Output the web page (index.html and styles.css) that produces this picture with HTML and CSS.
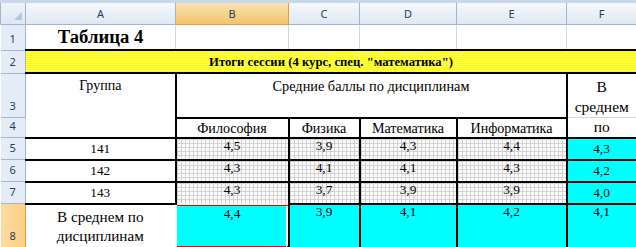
FILE: index.html
```html
<!DOCTYPE html>
<html>
<head>
<meta charset="utf-8">
<title>Таблица 4</title>
<link rel="stylesheet" href="styles.css">
</head>
<body>
<div class="sheet">
  <div class="topbar"></div>
  <table class="grid">
    <colgroup>
      <col class="c-rh"><col class="c-a"><col class="c-b"><col class="c-c"><col class="c-d"><col class="c-e"><col class="c-f">
    </colgroup>
    <tr class="r-hd">
      <th class="corner"><span class="tri"></span></th>
      <th class="ch">A</th><th class="ch ch-sel">B</th><th class="ch">C</th><th class="ch">D</th><th class="ch">E</th><th class="ch ch-last">F</th>
    </tr>
    <tr class="r1">
      <th class="rh">1</th>
      <td class="title">Таблица 4</td><td></td><td></td><td></td><td></td><td></td>
    </tr>
    <tr class="r2">
      <th class="rh">2</th>
      <td class="banner" colspan="6">Итоги сессии (4 курс, спец. "математика")</td>
    </tr>
    <tr class="r3">
      <th class="rh">3</th>
      <td class="grp" rowspan="2">Группа</td>
      <td class="box head" colspan="4">Средние баллы по дисциплинам</td>
      <td class="avg-top">В<br>среднем</td>
    </tr>
    <tr class="r4">
      <th class="rh">4</th>
      <td class="box subj">Философия</td>
      <td class="box subj">Физика</td>
      <td class="box subj">Математика</td>
      <td class="box subj">Информатика</td>
      <td class="avg-bot">по</td>
    </tr>
    <tr class="r5">
      <th class="rh">5</th>
      <td class="grpn">141</td>
      <td class="box pat">4,5</td><td class="box pat">3,9</td><td class="box pat">4,3</td><td class="box pat">4,4</td>
      <td class="box cy mid">4,3</td>
    </tr>
    <tr class="r6">
      <th class="rh">6</th>
      <td class="grpn">142</td>
      <td class="box pat">4,3</td><td class="box pat">4,1</td><td class="box pat">4,1</td><td class="box pat">4,3</td>
      <td class="box cy mid">4,2</td>
    </tr>
    <tr class="r7">
      <th class="rh">7</th>
      <td class="grpn">143</td>
      <td class="box pat pat-last">4,3</td><td class="box pat">3,7</td><td class="box pat">3,9</td><td class="box pat">3,9</td>
      <td class="box cy mid">4,0</td>
    </tr>
    <tr class="r8">
      <th class="rh rh-sel">8</th>
      <td class="total">В среднем по<br>дисциплинам</td>
      <td class="active">4,4<span class="handle"></span></td>
      <td class="box cy top">3,9</td><td class="box cy top">4,1</td><td class="box cy top">4,2</td><td class="box cy top">4,1</td>
    </tr>
    <tr class="r9">
      <th class="rh"></th>
      <td></td><td></td><td></td><td></td><td></td><td></td>
    </tr>
  </table>
</div>
</body>
</html>
```
FILE: styles.css
```css
html, body {
  margin: 0;
  padding: 0;
  background: #fff;
}
.sheet {
  width: 636px;
  height: 247px;
  overflow: hidden;
  font-family: "Liberation Serif", "Times New Roman", serif;
}
.topbar {
  height: 3px;
  background: #c9d7ea;
}
.grid {
  border-collapse: collapse;
  table-layout: fixed;
  width: 636px;
  color: #000;
  font-family: "Liberation Serif", "Times New Roman", serif;
}
.c-rh { width: 25px; }
.c-a { width: 150px; }
.c-b { width: 113px; }
.c-c { width: 71px; }
.c-d { width: 97px; }
.c-e { width: 110px; }
.c-f { width: 70px; }

.grid td {
  font-family: "Liberation Serif", "Times New Roman", serif;
  font-size: 13.33px;
  border: 1px solid #d0d7e5;
  padding: 0 2px;
  text-align: center;
  vertical-align: bottom;
  overflow: hidden;
  white-space: nowrap;
  line-height: 16px;
}

/* headers */
.grid th {
  font-family: "Noto Sans", "Liberation Sans", sans-serif;
  font-weight: normal;
  font-size: 11px;
  color: #2a3c57;
  padding: 0;
}
.r-hd { height: 21px; }
.corner {
  background: linear-gradient(#eef3fa, #dde7f4);
  border: 1px solid #9eb6ce;
  border-top: none;
  position: relative;
}
.tri {
  position: absolute;
  right: 3px;
  bottom: 4px;
  width: 0;
  height: 0;
  border-left: 8px solid transparent;
  border-bottom: 8px solid #b6c7dc;
}
.ch {
  background: linear-gradient(#f5f8fc, #dfe7f3);
  border: 1px solid #9eb6ce;
  border-top: none;
  vertical-align: middle;
}
.ch-sel {
  background: linear-gradient(#f9e1b5, #f2c46a);
  border-bottom-color: #f29536;
  border-right-color: #f29536;
}
.rh {
  background: #e4ecf7;
  border: 1px solid #9eb6ce;
  border-left: none;
  vertical-align: bottom;
  padding-bottom: 4px !important;
  line-height: 14px;
}
.rh-sel {
  background: linear-gradient(90deg, #fcdca4, #fbcf86);
  border-color: #f29536;
}

/* rows */
.r1 { height: 26px; }
.r2 { height: 23px; }
.r3 { height: 42px; }
.r4 { height: 20px; }
.r5, .r6, .r7 { height: 22px; }
.r8 { height: 44px; }
.r9 { height: 10px; }

.grid .title {
  font-weight: bold;
  font-size: 18.67px;
  vertical-align: middle;
}
.grid .banner {
  font-weight: bold;
  font-size: 12.7px;
  border-top: 2px solid #000;
  border-bottom: 2px solid #000;
  background-color: #ffff00;
  background-image:
    linear-gradient(#ffff00 1px, transparent 1px),
    linear-gradient(90deg, #ffffc4 1px, #ffff00 1px);
  background-size: 2px 2px, 2px 2px;
  vertical-align: middle;
}
.grid .grp {
  font-size: 14px;
  vertical-align: top;
  padding-top: 4px;
  border-top: 2px solid #000;
  border-right: 2px solid #000;
  border-bottom: 2px solid #000;
}
.grid .box {
  border: 2px solid #000;
}
.grid .head {
  font-size: 14.3px;
  vertical-align: top;
  padding-top: 4px;
}
.grid .subj {
  font-size: 14.1px;
  vertical-align: bottom;
  padding-bottom: 1px;
}
.grid .avg-top {
  font-size: 15.5px;
  line-height: 20px;
  vertical-align: top;
  padding-top: 3px;
  border-top: 2px solid #000;
  border-left: 2px solid #000;
}
.grid .avg-bot {
  font-size: 15.5px;
  padding-bottom: 2px;
  border-bottom: 2px solid #000;
  border-left: 2px solid #000;
}
.grid .grpn {
  vertical-align: middle;
  border-top: 2px solid #000;
  border-bottom: 2px solid #000;
  border-right: 2px solid #000;
}
.grid .pat {
  vertical-align: top;
  line-height: 13px;
  padding-top: 0;
  background-color: #fbfbfb;
  background-image:
    linear-gradient(#d2d2d2 1px, transparent 1px),
    linear-gradient(90deg, #d2d2d2 1px, transparent 1px);
  background-size: 4px 4px;
}
.grid .pat-last {
  border-bottom: 1px solid #fff;
}
.grid .cy {
  background: #00ffff;
  vertical-align: top;
}
.grid .mid {
  vertical-align: middle;
}
.grid .top {
  line-height: 13px;
  padding-top: 0;
}
.grid .total {
  font-size: 15.2px;
  line-height: 19px;
  vertical-align: middle;
  border-top: 2px solid #000;
  border-bottom: 2px solid #000;
  border-right: 2px solid #fff;
}
.grid .active {
  position: relative;
  background: #00ffff;
  vertical-align: top;
  line-height: 13px;
  padding-top: 2px;
  border-top: 2px solid #fff;
  border-bottom: 2px solid #fff;
  border-left: 2px solid #fff;
  border-right: 2px solid #000;
  box-shadow: inset 0 1px 0 #f00, inset 0 -1px 0 #f00, inset -2px 0 0 #fff;
}
.handle {
  position: absolute;
  right: -4px;
  bottom: -4px;
  width: 4px;
  height: 4px;
  background: #000;
  border: 1px solid #fff;
}
```
